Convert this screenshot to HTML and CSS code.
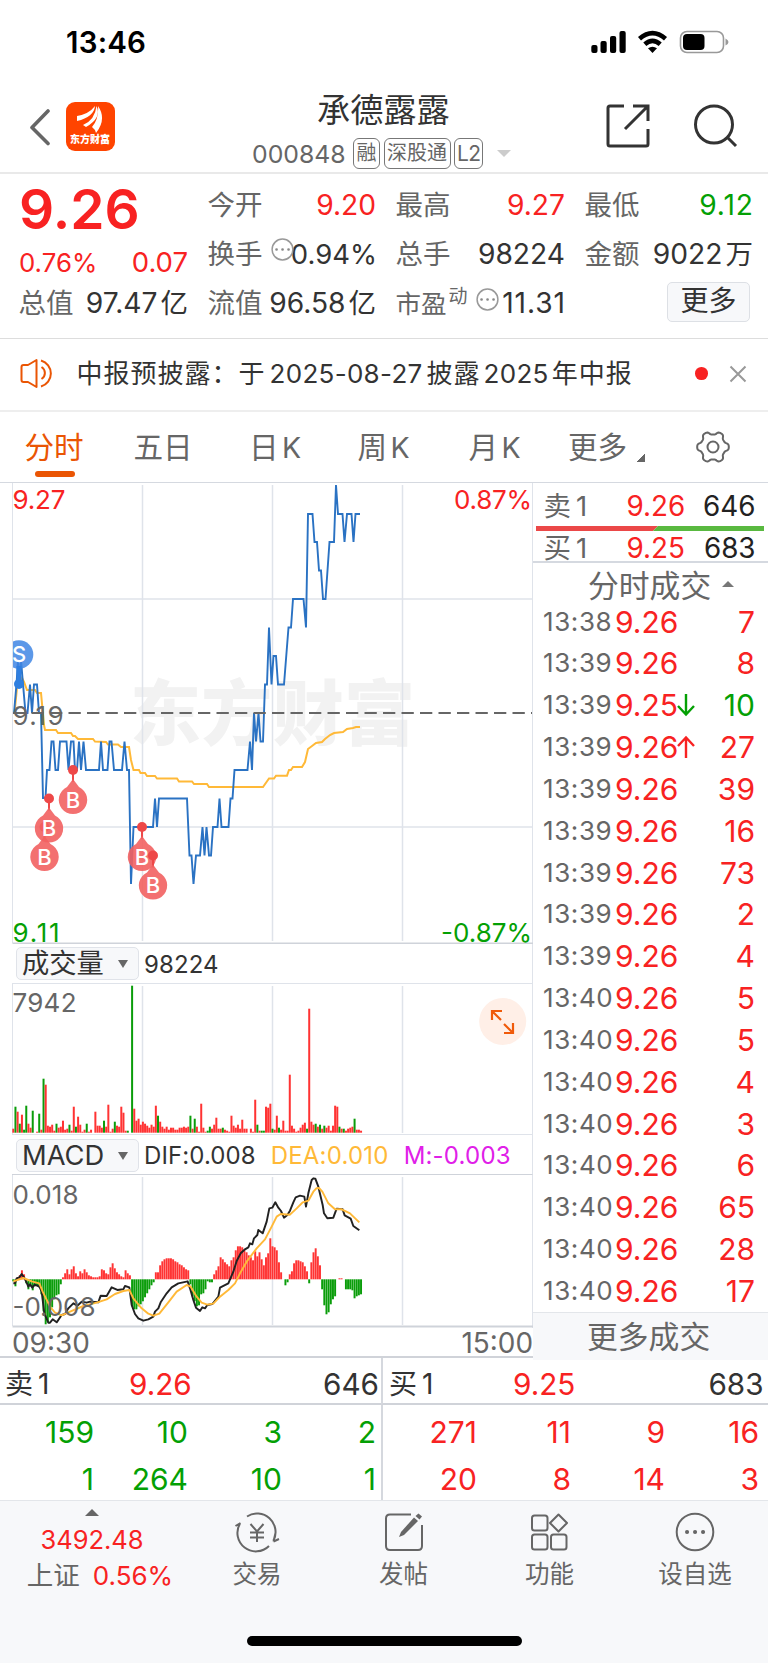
FILE: index.html
```html
<!DOCTYPE html>
<html lang="zh-CN">
<head>
<meta charset="utf-8">
<title>承德露露 000848</title>
<link rel="stylesheet" href="styles.css">
</head>
<body>
<div class="phone">
  <header class="status">
    <span class="clock">13:46</span>
    <svg class="status-icons" width="140" height="24" viewBox="590 30 140 24">
      <g fill="#000"><rect x="591.3" y="45" width="6.2" height="8" rx="2"/><rect x="600.5" y="41" width="6.2" height="12" rx="2"/><rect x="610" y="36" width="6.2" height="17" rx="2"/><rect x="619.5" y="31" width="6.2" height="22" rx="2"/></g>
      <g fill="none" stroke="#000" stroke-width="4.6"><path d="M639.5 38.8Q652.500 27.500 665.500 38.800"/><path d="M644.800 44.300Q652.500 37.500 660.200 44.300"/></g>
      <path d="M648 48.300Q652.500 45 657 48.300L652.500 53Z"/>
      <rect x="680.500" y="31.500" width="43" height="21" rx="6.500" fill="none" stroke="#999" stroke-width="1.600"/>
      <rect x="683" y="34" width="21.500" height="16" rx="4"/><path d="M725.500 38.500Q728.500 40 728.500 42T725.500 45.500Z" fill="#999"/>
    </svg>
  </header>

  <nav class="nav">
    <div class="nav-left">
      <svg width="22" height="38" viewBox="0 0 22 38" fill="none" stroke="#666" stroke-width="3.600" stroke-linecap="round" stroke-linejoin="round"><path d="M19 3L3 19.500L19 35.500"/></svg>
      <div class="logo">
        <svg width="28" height="30" viewBox="0 0 28 30" fill="#fff"><path d="M1 11Q13 9 19 1Q18 12 1 16Z"/><path d="M7 20Q19 15 20.500 1Q26 13 10 22Z"/><path d="M16 22Q23 14 22 1Q31 14 20 28Q19 24 16 22Z"/></svg>
        <span>东方财富</span>
      </div>
    </div>
    <div class="nav-title">
      <h1>承德露露</h1>
      <div class="code"><span>000848</span><i class="tag">融</i><i class="tag">深股通</i><i class="tag l2">L2</i><b class="tri-down"></b></div>
    </div>
    <div class="nav-right">
      <svg width="46" height="46" viewBox="0 0 46 46" fill="none" stroke="#333" stroke-width="3"><path d="M19 3H5Q3 3 3 5V41Q3 43 5 43H41Q43 43 43 41V26M28 3H43V18M43 3L20 26"/></svg>
      <svg width="46" height="46" viewBox="0 0 46 46" fill="none" stroke="#333" stroke-width="3"><circle cx="22" cy="21.500" r="18.500"/><path d="M35 34L44 43"/></svg>
    </div>
  </nav>

  <section class="quote">
    <div class="qcol main-q">
      <div class="big">9.26</div>
      <div class="qr chg red"><span class="pct">0.76%</span><span class="diff">0.07</span></div>
      <div class="qr"><label>总值</label><span>97.47<em>亿</em></span></div>
    </div>
    <div class="qcol">
      <div class="qr up"><label>今开</label><span class="red">9.20</span></div>
      <div class="qr up"><label>换手</label><svg class="dots d1" width="23" height="23" viewBox="0 0 23 23"><circle cx="11.500" cy="11.500" r="10.400" fill="none" stroke="#999" stroke-width="1.500"/><path d="M5.500 11.500h.1M11.500 11.500h.1M17.500 11.500h.1" stroke="#888" stroke-width="2.600" stroke-linecap="round"/></svg><span class="rate">0.94%</span></div>
      <div class="qr"><label>流值</label><span>96.58<em>亿</em></span></div>
    </div>
    <div class="qcol">
      <div class="qr up"><label>最高</label><span class="red">9.27</span></div>
      <div class="qr up"><label>总手</label><span>98224</span></div>
      <div class="qr"><label class="pe">市盈<sup>动</sup></label><svg class="dots d2" width="23" height="23" viewBox="0 0 23 23"><circle cx="11.500" cy="11.500" r="10.400" fill="none" stroke="#999" stroke-width="1.500"/><path d="M5.500 11.500h.1M11.500 11.500h.1M17.500 11.500h.1" stroke="#888" stroke-width="2.600" stroke-linecap="round"/></svg><span class="wide">11.31</span></div>
    </div>
    <div class="qcol">
      <div class="qr up"><label>最低</label><span class="green wide">9.12</span></div>
      <div class="qr up"><label>金额</label><span>9022<em>万</em></span></div>
      <div class="qr more-row"><button class="more">更多</button></div>
    </div>
  </section>

  <section class="news">
    <svg width="36" height="32" viewBox="0 0 36 32" fill="none" stroke="#ea5504" stroke-width="2" stroke-linejoin="round"><path d="M1.500 9Q1.500 7 3.500 7H8L16.500 2V29L8 24H3.500Q1.500 24 1.500 22Z"/><path d="M21.500 9A7 7 0 0 1 21.500 21M21 2.500A13.500 13.500 0 0 1 21 28.500"/></svg>
    <p><span>中报预披露：</span><span>于</span><b class="n1">2025-08-27</b><span>披露</span><b class="n2">2025</b><span>年中报</span></p>
    <i class="dot"></i>
    <svg class="close" width="18" height="18" viewBox="0 0 18 18" stroke="#999" stroke-width="2"><path d="M1.500 1.500L16.500 16.500M16.500 1.500L1.500 16.500"/></svg>
  </section>

  <nav class="tabs">
    <a class="on">分时</a><a>五日</a><a>日<u>K</u></a><a>周<u>K</u></a><a>月<u>K</u></a><a>更多<b class="corner"></b></a>
    <a class="gear"><svg width="34" height="34" viewBox="0 0 34 34" fill="none" stroke="#666" stroke-width="2" stroke-linejoin="round"><circle cx="17" cy="17" r="5.500"/><path id="gear"/></svg></a>
  </nav>

  <main class="main">
    <section class="charts">
      <svg class="chart" width="533" height="461" viewBox="0 483 533 461" id="price">
        <text class="wm" x="130" y="739" textLength="285">东方财富</text>
        <path class="grid" d="M13 599H532M13 827H532M142.500 485V941M272.500 485V941M402.500 485V941"/>
        <path class="edge" d="M12.500 483V943M532.500 483V944"/>
        <path d="M12.500 943.300H533" stroke="#cfd3da" stroke-width="1.400"/>
        <text class="lab red" x="12.500" y="508.500" textLength="53">9.27</text><text class="lab red" x="454" y="508.500" textLength="78">0.87%</text>
        <text class="lab green" x="12.500" y="941.500" textLength="47">9.11</text><text class="lab green" x="441" y="941.500" textLength="91">-0.87%</text>
        <polyline class="avg" points="15,708 17,688 22,678 24,682 27,690 35,690 37,693 41,693 44,725 45,730 56,730 58,733 71,733 73,736 75,736 78,739 93,739 95,741.500 106,742 108,744.500 118,744.500 121,747 129,747 131,760 133.500,770 139,770 140.500,773 145,773 147,776 155,776 157,778.500 177,778.500 179,781.500 192,781.500 194,784 207,784 209,787 263,787 269,778.500 274,778.500 276,775.700 287,775.700 289,770 291,770 293,767 302,767 305,762 308,749 312,746 316,743 322,742 325,739 330,735 334,733 343,732 347,729 353,728 356,727 360,727"/>
        <polyline class="px" points="14,713 16.500,684 18,660 19.500,684 21,660 23,684 25.500,713 27.500,713 30,684.500 32,713 34,684.500 37,684.500 39,713 41,713 43,798 45.500,798 47,770 49.500,770 51.500,741.500 53.500,741.500 55.500,770 58,770 60,741.500 66.500,741.500 68.500,770 71,741.500 73.500,741.500 75,770 77,770 79,741.500 81,770 83.500,741.500 86,770 99,770 101,741.500 103,770 107.500,770 109.500,741.500 111.500,741.500 114,770 122,770 124.500,741.500 127,770 129,770 131,884 133.500,827 153,827 155,798.500 157,827 159,798.500 187,798.500 189.500,855.500 191.500,855.500 193.500,884 196,855.500 200,855.500 202.500,827 204.500,855.500 206.500,827 209,855.500 211,855.500 213,827 217.500,827 219.500,798.500 221.500,827 228.500,827 230.500,798.500 232.500,798.500 234.500,770 247.500,770 250,741.500 252,770 254,713 256,741.500 258.500,713 260.500,741.500 263,741.500 265,684.500 267,684.500 269,627.500 271.500,684.500 273.500,656 276,656 278,684.500 284,684.500 288.500,627.500 291,627.500 293,599 303.500,599 306,627.500 308,514 312.500,514 314.500,542 317,542 319,570.500 321,570.500 323,599 325.500,599 329.500,542 334,542 336,485 338,514 342.500,514 344.500,542 347,514 351.500,514 353.500,542 355.500,514 360,514"/>
        <path d="M13 713H532" stroke="#666" stroke-width="1.800" stroke-dasharray="12.300 6.200"/>
        <text class="lab gray" x="12.500" y="725" textLength="51">9.19</text>
        <g id="pins"></g>
      </svg>
      <div class="ind"><button>成交量<b></b></button><span class="v1">98224</span></div>
      <svg class="chart" width="533" height="151" viewBox="0 984 533 151">
        <path class="grid" d="M142.500 986V1133M272.500 986V1133M402.500 986V1133"/>
        <path class="edge" d="M12.500 984V1134M532.500 984V1135M12 1134.500H533"/>
        <text class="lab gray" x="12.500" y="1011.500" textLength="64">7942</text>
        <g id="vol"></g>
        <circle cx="502.700" cy="1021.500" r="23.500" fill="#ffefe7"/>
        <path d="M501 1020L492 1011M492 1020V1011H502M504 1024L513 1033M513 1023V1033H504" fill="none" stroke="#f05a0a" stroke-width="2.200"/>
      </svg>
      <div class="ind ind2"><button>MACD<b></b></button><span class="v2">DIF:0.008</span><span class="v3">DEA:0.010</span><span class="v4">M:-0.003</span></div>
      <svg class="chart" width="533" height="153" viewBox="0 1175 533 153">
        <path class="grid" d="M142.500 1177V1325M272.500 1177V1325M402.500 1177V1325"/>
        <path class="edge" d="M12.500 1175V1326M532.500 1175V1328"/>
        <path d="M12.500 1326.500H533" stroke="#cfd3da" stroke-width="2"/>
        <g id="macd"></g>
        <g transform="translate(0 1140) scale(.33333)" fill="none" stroke-width="5.800" stroke-linejoin="round">
          <polyline stroke="#222" points="40,430 45,430 50,415 58,412 65,402 72,412 80,428 85,440 90,433 97,443 104,434 118,440 125,455 133,520 145,548 150,548 158,538 170,547 185,525 195,522 205,505 220,490 232,497 245,485 260,488 270,485 295,487 302,467 320,468 335,442 352,450 370,448 375,438 388,442 395,495 405,522 415,535 430,542 445,538 460,530 465,515 475,505 482,487 500,460 515,442 535,430 563,424 570,445 580,480 588,503 600,513 607,502 615,505 622,495 637,492 655,470 660,443 685,430 700,395 710,363 722,340 735,328 745,322 750,310 757,313 762,295 772,285 775,270 788,280 800,245 808,205 817,203 826,187 835,203 843,213 852,233 862,225 870,212 880,187 887,172 900,167 913,170 918,200 925,160 935,120 940,115 946,116 955,140 968,195 972,220 982,235 1000,233 1010,206 1028,208 1034,226 1052,236 1060,258 1078,271"/>
          <polyline stroke="#ffb938" points="40,424 70,414 95,424 118,430 128,455 150,500 165,518 185,526 205,517 250,498 290,488 320,478 345,462 370,453 388,450 400,475 425,505 445,521 460,527 478,521 505,487 530,455 560,435 572,440 590,470 605,488 622,494 640,491 660,470 685,450 705,430 720,400 740,365 770,325 795,298 815,260 830,230 842,222 870,224 890,205 908,187 925,182 940,155 949,145 957,144 967,155 985,190 1005,208 1025,208 1050,220 1078,247"/>
        </g>
        <text class="lab gray" x="12.500" y="1203.500" textLength="66">0.018</text><text class="lab gray" x="12.500" y="1315.500" textLength="83">-0.008</text>
      </svg>
      <div class="axis"><span>09:30</span><span>15:00</span></div>
    </section>

    <aside class="side">
      <div class="lv sell"><span>卖<s>1</s></span><b>9.26</b><i>646</i></div>
      <svg class="ratio" width="228" height="5" viewBox="0 0 228 5"><path d="M0 0H122L117 5H0Z" fill="#eb4848"/><path d="M122 0H228V5H117Z" fill="#59b940"/></svg>
      <div class="lv buy"><span>买<s>1</s></span><b>9.25</b><i>683</i></div>
      <div class="side-title">分时成交<b></b></div>
      <div class="trades" id="trades"></div>
      <div class="side-more">更多成交</div>
    </aside>
  </main>

  <section class="depth">
    <div class="dh"><span>卖<s>1</s></span><b>9.26</b><i>646</i></div>
    <div class="dh dr"><span>买<s>1</s></span><b>9.25</b><i>683</i></div>
    <div class="dg green"><span>159</span><span>10</span><span>3</span><span>2</span><span>1</span><span>264</span><span>10</span><span>1</span></div>
    <div class="dg dr red"><span>271</span><span>11</span><span>9</span><span>16</span><span>20</span><span>8</span><span>14</span><span>3</span></div>
  </section>

  <footer class="foot">
    <div class="items">
      <div class="idx"><b></b><span class="red i1">3492.48</span><span class="i2">上证<em class="red">0.56%</em></span></div>
      <div class="it"><svg width="46" height="42" viewBox="234 1511 46 42" fill="none" stroke="#666" stroke-width="2"><path d="M247 1516.500A18.500 18.500 0 0 1 273.500 1540.500M269 1546A18.500 18.500 0 0 1 240 1523.500M235.500 1526L240.500 1523M273.500 1541.500L279 1539M273.500 1541.500L275.500 1533M250.500 1524L257 1531.500L263.500 1524M257 1531.500V1542M250 1532.500H264M250 1537.500H264"/></svg><span>交易</span></div>
      <div class="it"><svg width="42" height="42" viewBox="383 1511 42 42" fill="none" stroke="#666" stroke-width="2"><path d="M411 1514.500H390Q386 1514.500 386 1518.500V1546Q386 1550 390 1550H418Q422 1550 422 1546V1525"/><path d="M399 1537L401 1532L414 1517.500L418 1521L404 1535Z" fill="#666" stroke="none"/><path d="M415.500 1516L418.500 1513.500L422 1516.500L419.500 1519.500Z" fill="#666" stroke="none"/></svg><span>发帖</span></div>
      <div class="it"><svg width="42" height="42" viewBox="529 1511 42 42" fill="none" stroke="#666" stroke-width="2" stroke-linejoin="round"><rect x="532" y="1515.500" width="15.500" height="15" rx="2.500"/><rect x="532" y="1534.500" width="15.500" height="15" rx="2.500"/><rect x="551" y="1534.500" width="15.500" height="15" rx="2.500"/><path d="M558.500 1514.500L567 1523L558.500 1531.500L550 1523Z"/></svg><span>功能</span></div>
      <div class="it"><svg width="42" height="42" viewBox="674 1511 42 42" fill="none" stroke="#666" stroke-width="2"><circle cx="695" cy="1532" r="18.300"/><path d="M687 1532h.1M695 1532h.1M703 1532h.1" stroke-width="4" stroke-linecap="round"/></svg><span>设自选</span></div>
    </div>
    <div class="home"></div>
  </footer>
</div>
<script src="app.js"></script>
</body>
</html>
```

FILE: styles.css
```css
* { box-sizing: border-box; }
body { margin: 0; background: #fff; }
.phone { width: 768px; height: 1663px; overflow: hidden; display: flex; flex-direction: column; font-family: Inter, "Noto Sans CJK SC", sans-serif; color: #333; }
svg { display: block; flex: none; }
i, em { font-style: normal; }
b, h1 { font-weight: 400; }
u, s { text-decoration: none; }
button { font: inherit; color: inherit; padding: 0; }
.red { color: #f82222; }
.green { color: #04a004; }

.status { height: 80px; display: flex; justify-content: space-between; padding: 24px 38px 0 66px; }
.clock { font-size: 29.500px; font-weight: 600; line-height: 37px; letter-spacing: .200px; color: #000; }
.status-icons { margin-top: 6px; }

.nav { height: 94px; border-bottom: 2px solid #e9e9e9; display: grid; grid-template-columns: 252px 1fr 162px; }
.nav-left { display: flex; padding: 22px 0 0 29px; gap: 14.500px; align-items: flex-start; }
.nav-left > svg { margin-top: 6px; }
.logo { width: 49px; height: 49px; border-radius: 9px; background: #ff4400; color: #fff; display: flex; flex-direction: column; align-items: center; padding-top: 3px; }
.logo span { font-size: 10px; line-height: 11px; font-weight: 900; margin-top: -1px; }
.nav h1 { margin: 0; padding: 12px 0 0 65px; font-size: 33.200px; line-height: 36px; }
.code { display: flex; align-items: center; height: 31px; margin-top: 10px; font-size: 24.800px; color: #666; }
.code span { width: 101px; }
.tag { height: 31px; border: 1.500px solid #777; border-radius: 6px; font-size: 20px; line-height: 29px; padding: 0 2.500px; margin-right: 3.500px; }
.l2 { font-size: 21px; padding: 0 2px; letter-spacing: -.5px; width: 29px; }
.tri-down { border: 7.500px solid transparent; border-top: 7.500px solid #ccc; border-bottom: 0; margin-left: 10px; }
.nav-right { display: flex; padding: 23px 0 0; gap: 41px; margin-left: -1px; }

.quote { height: 165px; border-bottom: 1px solid #ddd; display: grid; grid-template-columns: 168px 167px 168px 167px; column-gap: 21px; padding: 6px 0 0 20px; font-size: 27.500px; }
.qr { height: 49.400px; line-height: 49.400px; display: flex; justify-content: space-between; position: relative; white-space: nowrap; }
.qr.up { line-height: 51px; }
.qr label { color: #666; margin-left: -1.500px; }
.qr > span { font-size: 28.200px; }
.qr em { margin-left: 3px; font-size: 27.500px; }
.big { height: 64px; line-height: 58px; font-size: 55px; font-weight: 600; color: #f82222; margin-left: -1px; }
.qr.chg { height: 34.800px; line-height: 37px; }
.qr > .pct { font-size: 25.800px; margin-left: -1px; }
.qr > .diff { font-size: 27.500px; }
.qr > .rate { font-size: 27.500px; margin-right: -1px; }
.qr > .wide { letter-spacing: .900px; margin-right: -.900px; }
.dots { position: absolute; top: 9px; }
.d1 { left: 61.500px; }
.d2 { left: 78.500px; }
.qr .pe { font-size: 25.500px; }
.pe sup { font-size: 19px; line-height: 1; vertical-align: 10px; margin-left: 2px; }
.more-row { justify-content: flex-end; }
.more { width: 83px; height: 40px; margin: 3px 3px 0 0; background: #f7f8fa; border: 1.500px solid #dde0e5; border-radius: 5px; font-size: 28px; line-height: 37px; }

.news { height: 73px; border-bottom: 2px solid #eee; display: flex; align-items: center; padding: 0 21px 2px 20px; font-size: 26px; }
.news p { margin: 0 0 0 20.500px; flex: 1; line-height: 40px; white-space: nowrap; letter-spacing: 1px; }
.n1 { margin: 0 4px 0 4px; letter-spacing: .300px; }
.n2 { margin: 0 3px 0 3px; letter-spacing: .300px; }
.dot { width: 12.600px; height: 12.600px; border-radius: 50%; background: #f82222; }
.close { margin-left: 21.500px; }

.tabs { height: 71px; border-bottom: 1.500px solid #d5d9e0; display: grid; grid-template-columns: 108px 110px 114px 103px 119px 87px 127px; font-size: 29.600px; line-height: 70px; color: #666; }
.tabs a { position: relative; text-align: center; white-space: nowrap; }
.tabs u { margin-left: 3.500px; font-size: 28.500px; }
.tabs .on { color: #ea5504; }
.tabs .on::after { content: ""; position: absolute; left: 35px; top: 59px; width: 40px; height: 6px; border-radius: 3px; background: #ea5504; }
.corner { position: absolute; left: 83px; top: 41px; width: 8px; height: 9px; background: linear-gradient(135deg, transparent 50%, #666 50%); }
.gear svg { margin: 18px 0 0 55px; }

.main { height: 875px; display: grid; grid-template-columns: 533px 235px; }
.charts { display: flex; flex-direction: column; position: relative; }
.chart { overflow: visible; }
.lab { font-family: Inter, sans-serif; font-size: 26px; fill: #666; }
.lab.red { fill: #f82222; }
.lab.green { fill: #04a004; }
.wm { font: 900 71px "Noto Sans CJK SC", sans-serif; fill: #f2f2f2; }
.grid { stroke: #dfe3ea; stroke-width: 1.500; fill: none; }
.edge { stroke: #dfe3ea; fill: none; }
.avg { fill: none; stroke: #ffb938; stroke-width: 2; }
.px { fill: none; stroke: #2a72c3; stroke-width: 1.900; }
.pin { font: 500 22px Inter, sans-serif; fill: #fff; text-anchor: middle; }
.ind { height: 40px; border-bottom: 1px solid #dfe3ea; border-right: 1px solid #dfe3ea; margin-left: 12px; padding: 3px 0 0 4px; display: flex; font-size: 24px; line-height: 39px; white-space: nowrap; }
.ind2 { border-bottom: 1.500px solid #cfd3da; padding-top: 4px; line-height: 38px; }
.ind button { width: 122.500px; height: 33px; background: #f7f8fa; border: 1.500px solid #e0e3e9; border-radius: 5px; font-size: 27.300px; line-height: 29px; display: flex; justify-content: space-between; align-items: center; padding: 0 10px 0 5px; }
.ind button b { border: 5px solid transparent; border-top: 8px solid #666; border-bottom: 0; }
.ind span { margin: -2px 0 0 5.500px; letter-spacing: .100px; }
.ind .v3 { color: #ffb938; margin-left: 15px; letter-spacing: .200px; }
.ind .v4 { color: #e020e8; margin-left: 15px; letter-spacing: .200px; }
.axis { height: 30px; border-bottom: 2px solid #d0d3d9; display: flex; justify-content: space-between; padding-left: 12px; font-size: 27.900px; line-height: 30px; color: #666; }

.side { display: flex; flex-direction: column; }
.lv { display: grid; grid-template-columns: 83px 60px 69px; padding-left: 10.500px; font-size: 27.800px; white-space: nowrap; }
.lv span { color: #666; font-size: 27.500px; }
.lv s, .dh s { margin-left: 5px; }
.lv b { color: #f82222; }
.lv i { text-align: right; color: #222; }
.sell { height: 43px; line-height: 46px; }
.ratio { margin-left: 3px; }
.buy { height: 32px; line-height: 34px; border-bottom: 2px solid #d5d9e0; }
.side-title { height: 37.500px; line-height: 45px; font-size: 30.800px; color: #666; padding-left: 55px; display: flex; }
.side-title b { border: 6px solid transparent; border-bottom: 6px solid #777; border-top: 0; align-self: center; margin: 4px 0 0 11px; }
.row { height: 41.850px; line-height: 42.500px; display: grid; grid-template-columns: 72px 62px 20px 58px; padding-left: 10px; font-size: 30px; color: #f82222; align-items: center; white-space: nowrap; }
.row span { font-size: 26px; letter-spacing: .600px; color: #666; }
.row i { text-align: right; }
.row i.green { color: #04a004; }
.side-more { height: 48px; flex: none; background: #f7f8fa; border-top: 1.500px solid #e3e6ea; font-size: 30.800px; line-height: 48px; color: #666; padding-left: 54px; }

.depth { height: 142px; display: grid; grid-template: 47px 95px / 381px 387px; font-size: 29.700px; }
.dh { display: grid; grid-template-columns: 124px 1fr auto; padding: 3px 2px 0 5px; line-height: 47px; border-bottom: 2px solid #d0d3d9; }
.dh span { font-size: 28px; }
.dh b { color: #f82222; }
.dr { border-left: 2px solid #d5d8de; }
.dh.dr { padding-right: 4.500px; padding-left: 6px; }
.dg { display: grid; grid-template-columns: repeat(4, 94px); grid-auto-rows: 47.300px; line-height: 47.300px; text-align: right; font-size: 30px; padding-top: 4px; }
.dg.dr { margin-left: 0; }

.foot { height: 163px; background: #f7f8fa; border-top: 1.500px solid #e3e6ea; display: flex; flex-direction: column; justify-content: space-between; align-items: center; color: #666; }
.items { width: 768px; display: grid; grid-template-columns: 184px 146px 147px 145px 146px; }
.idx { display: flex; flex-direction: column; align-items: center; padding: 8px 0 0; }
.idx b { border: 7px solid transparent; border-bottom: 7px solid #666; border-top: 0; }
.i1 { font-size: 25.500px; line-height: 36px; margin-top: 6px; }
.i2 { font-size: 26.500px; line-height: 35px; margin: 0 0 0 16px; white-space: nowrap; }
.i2 em { font-size: 26px; margin-left: 13px; }
.it { display: flex; flex-direction: column; align-items: center; padding-top: 10px; font-size: 24.500px; line-height: 36px; }
.it span { margin-top: 3px; }
.home { width: 275px; height: 10px; border-radius: 5px; background: #000; margin-bottom: 17px; }
```

FILE: app.js
```js
const colors = { r: '#f33', g: '#0a9d0a' };
const x0 = 13.3, step = 2.16;

// Per-minute volume: colour letter followed by bar height
const volume = 'r4 g26 r21 g9 r18 g3 g27 r9 r5 g22 r0 r1 g19 r3 g54 r48 r7 r6 r8 r2 g9 r5 r6 r12 r3 r4 g8 r2 r26 g6 r16 r8 r1 r3 g9 r1 r3 r0 r21 r7 r7 r5 g12 r6 r28 r1 r4 g11 r7 r6 r26 r20 r2 g2 r0 g147 r24 r12 r14 r8 r11 r9 r7 r5 r8 r6 r27 g17 r11 r6 r4 r6 r3 r5 r5 r3 r3 r5 r5 r6 r5 r6 g17 r4 g14 r6 r1 r29 r5 r1 g2 g6 r4 r8 r15 r4 r4 g5 r3 r2 r1 r17 r7 r5 r8 r4 r13 r4 r4 r0 r4 r1 r33 g8 r2 g2 g2 r26 r25 r29 g4 r3 r17 g5 r3 r12 r2 r2 r58 r7 r4 r1 r2 r5 r8 r10 g4 r124 r11 r8 g9 r6 g8 r4 g7 r5 r7 r2 r7 r27 r26 g6 r4 g4 r2 r4 r5 r6 g14 r3 r3 r2';
document.getElementById('vol').innerHTML = volume.split(' ').map((v, i) => {
  const h = +v.slice(1);
  return `<rect x="${x0 + step * i - 1}" y="${1132.7 - h}" width="2" height="${h}" fill="${colors[v[0]]}"/>`;
}).join('');

// MACD histogram, positive values above the zero line
const macd = [-2,-7,2,4,9,5,-4,-10,-7,-11,-7,-6,-8,-15,-32,-45,-43,-38,-28,-20,-16,-15,-5,2,6,10,5,10,13,6,3,8,6,10,7,4,3,2,2,2,3,10,9,6,5,12,16,11,7,5,3,2,9,6,4,-27,-30,-30,-27,-25,-22,-18,-14,-10,-6,-3,7,7,14,18,20,21,21,21,20,18,17,15,14,12,10,9,-5,-17,-22,-27,-26,-15,-14,-10,-2,-3,-3,5,9,13,22,20,17,15,13,19,22,29,33,33,32,29,27,24,22,19,28,23,27,20,14,22,26,41,33,32,29,17,7,0,-6,-3,5,8,16,19,19,18,17,13,8,-4,17,27,31,23,14,-10,-26,-35,-33,-25,-20,-17,0,1,1,0,-10,-10,-10,-11,-19,-17,-16,-15];
document.getElementById('macd').innerHTML = macd.map((v, i) =>
  `<rect x="${x0 + step * i - 1}" y="${v > 0 ? 1279.3 - v : 1279.3}" width="1.95" height="${Math.abs(v)}" fill="${colors[v > 0 ? 'r' : 'g']}"/>`
).join('');

// Buy and sell markers on the price line
const pins = [[44.5, 827], [49, 798.5], [73, 770], [142, 827], [153, 855.5]];
document.getElementById('pins').innerHTML = pins.map(([x, y]) =>
  `<path d="M${x} ${y}V${y + 12}" stroke="#ee4848" stroke-width="2"/><circle cx="${x}" cy="${y}" r="5" fill="#ee4848"/>
   <path d="M${x} ${y + 9}L${x + 6} ${y + 17}A14.200 14.200 0 1 1 ${x - 6} ${y + 17}Z" fill="#f26060" fill-opacity=".9"/>
   <text class="pin" x="${x}" y="${y + 37.5}">B</text>`).join('') +
  `<clipPath id="c"><rect x="13" y="630" width="60" height="70"/></clipPath><g clip-path="url(#c)">
   <circle cx="19" cy="654.500" r="14.300" fill="#3f86e4" fill-opacity=".85"/><path d="M19 666V684" stroke="#2f7fe0" stroke-width="5"/>
   <circle cx="19" cy="684" r="5" fill="#2f7fe0"/><text class="pin" x="19" y="662">S</text></g>`;

// Six-lobed gear outline
let d = '';
for (let k = 0; k <= 120; k++) {
  const a = k / 120 * Math.PI * 2;
  const r = 14.1 + 1.8 * Math.tanh(1.8 * Math.cos(6 * a));
  d += (k ? 'L' : 'M') + (17 + r * Math.cos(a)).toFixed(2) + ' ' + (17 + r * Math.sin(a)).toFixed(2);
}
document.getElementById('gear').setAttribute('d', d + 'Z');

const trades = [['13:38','9.26',7],['13:39','9.26',8],['13:39','9.25',10,'d'],['13:39','9.26',27,'u'],['13:39','9.26',39],['13:39','9.26',16],['13:39','9.26',73],['13:39','9.26',2],['13:39','9.26',4],['13:40','9.26',5],['13:40','9.26',5],['13:40','9.26',4],['13:40','9.26',3],['13:40','9.26',6],['13:40','9.26',65],['13:40','9.26',28],['13:40','9.26',17]];
const arrows = {
  d: '<svg width="18" height="24" viewBox="0 0 18 24" fill="none" stroke="#04a004" stroke-width="2.400"><path d="M9 1V21M1 13L9 21.500L17 13"/></svg>',
  u: '<svg width="18" height="24" viewBox="0 0 18 24" fill="none" stroke="#f82222" stroke-width="2.400"><path d="M9 23V3M1 11L9 2.500L17 11"/></svg>'
};
document.getElementById('trades').innerHTML = trades.map(([t, p, q, a]) =>
  `<div class="row"><span>${t}</span><b>${p}</b><div>${arrows[a] || ''}</div><i class="${a === 'd' ? 'green' : ''}">${q}</i></div>`).join('');
```
